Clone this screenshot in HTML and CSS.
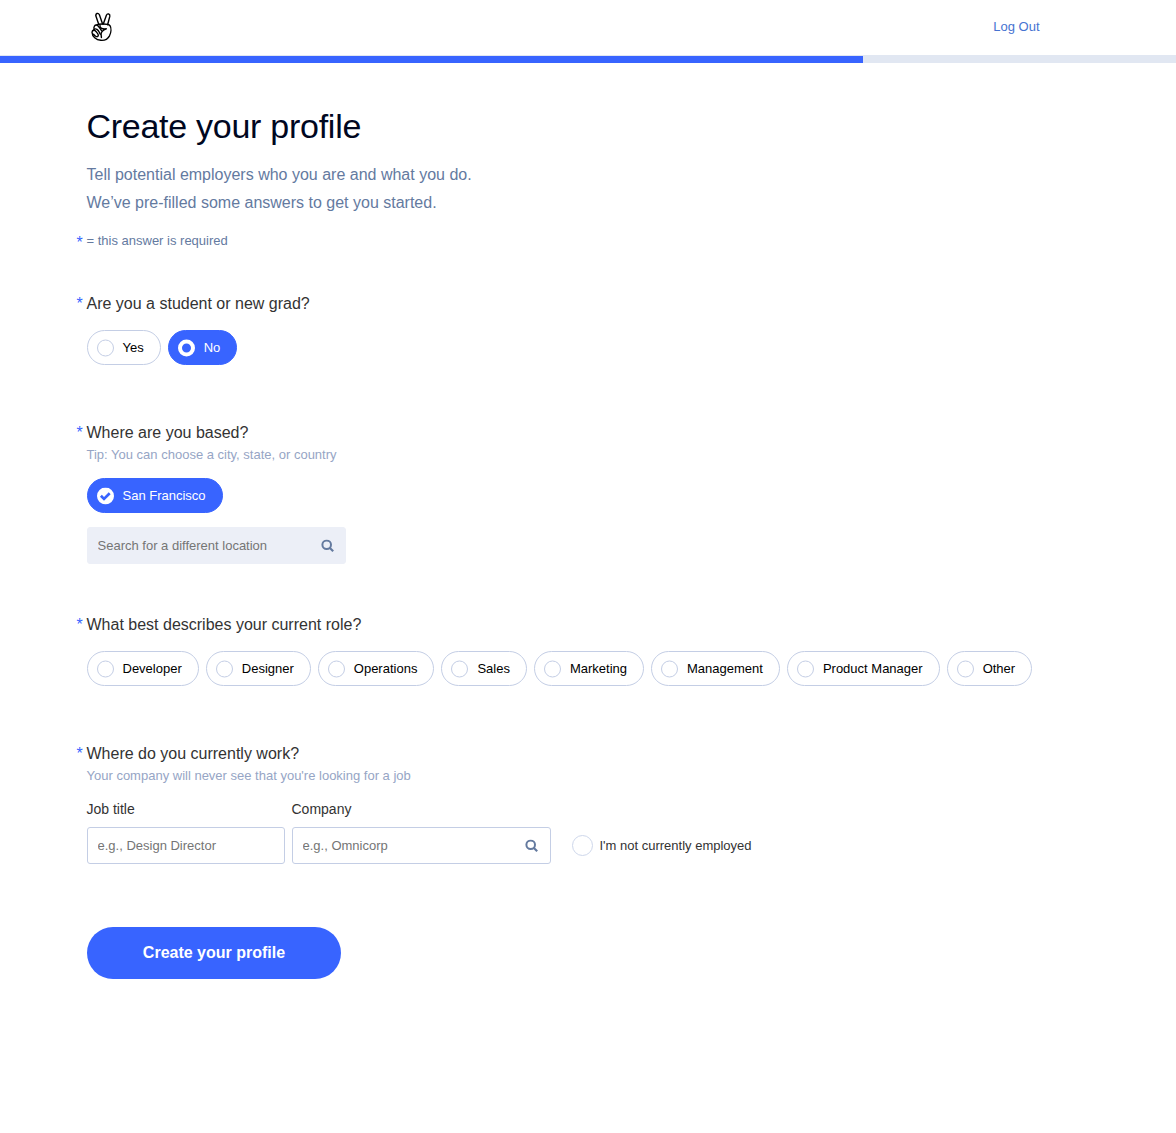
FILE: index.html
```html
<!DOCTYPE html>
<html lang="en">
<head>
<meta charset="utf-8">
<title>Create your profile</title>
<link rel="stylesheet" href="styles.css">
</head>
<body>
<svg width="0" height="0" class="sprite" aria-hidden="true">
  <symbol id="search" viewBox="0 0 13 13">
    <circle cx="5.7" cy="5.3" r="4.3" fill="none" stroke="currentColor" stroke-width="2"/>
    <path d="M8.6 8.2 12.2 11.8" stroke="currentColor" stroke-width="2.2"/>
  </symbol>
</svg>
<header class="header">
  <a class="logo" href="#" aria-label="Home">
    <svg width="22" height="30" viewBox="0 0 22 30" fill="none" stroke="#000" stroke-width="1.4" stroke-linejoin="round" stroke-linecap="round">
      <path d="M7.7 12.2 4.9 4.1C4.3 1.5 7.1.2 8.4 2.8L11.6 12"/>
      <path d="M12.3 12 15.4 3.2C16.4.9 19.4 1.8 18.8 4.4L16.6 12.7"/>
      <path d="M5.8 12.9C7.4 12 9 12 11.4 12c3.1 0 6-.2 7.6 1.7 1.5 2.3 1.1 6.9-.5 10.1-1.7 3.2-4.9 4.8-8.7 4.5C5.1 27.9 1.2 24.6 1 20.2c0-1.6 1-2.2 2.1-2.6"/>
      <path d="M3.2 17.5c-1-2.6.7-5.1 2.8-4.3 1.4.5 2.4 2.5 4.5 5.3"/>
      <path d="M1.9 18.7c1.4-1.3 3 .2 4.1 1.9 1 1.3 1.8 2.9.9 3.7-1.2 1.1-3.3-.6-4.4-2"/>
      <path d="M3.3 17.3c1.6-1.3 3.8.6 5 2.9l1 2"/>
      <path d="M9 13.4c-.6 2.3 1.5 3.8 6.3 3.4-3.6 1.4-5.5 3-5.2 5.6.1 1.6.3 2.2.3 3.1"/>
    </svg>
  </a>
  <a class="logout" href="#">Log Out</a>
</header>
<div class="progress"><div class="progress-fill"></div></div>

<main class="main">
  <h1 class="title">Create your profile</h1>
  <p class="intro">Tell potential employers who you are and what you do.<br>We’ve pre-filled some answers to get you started.</p>
  <p class="note"><span class="star star-note">*</span>= this answer is required</p>

  <section class="question">
    <h2 class="label"><span class="star">*</span>Are you a student or new grad?</h2>
    <div class="pills">
      <div class="pill"><span class="radio"></span>Yes</div>
      <div class="pill pill-on"><span class="radio radio-on"></span>No</div>
    </div>
  </section>

  <section class="question question-location">
    <h2 class="label"><span class="star">*</span>Where are you based?</h2>
    <p class="tip">Tip: You can choose a city, state, or country</p>
    <div class="pills pills-tip">
      <div class="pill pill-on">
        <svg class="check" width="17" height="17" viewBox="0 0 17 17"><circle cx="8.5" cy="8.5" r="8.5" fill="#fff"/><path d="m3.9 8.3 3.1 3.1 5.7-5.7" fill="none" stroke="#3864ff" stroke-width="2.7"/></svg>San Francisco
      </div>
    </div>
    <div class="field field-gray field-wide">
      <input class="input" type="text" placeholder="Search for a different location">
      <svg class="glass" width="13" height="13"><use href="#search"/></svg>
    </div>
  </section>

  <section class="question">
    <h2 class="label"><span class="star">*</span>What best describes your current role?</h2>
    <div class="pills">
      <div class="pill"><span class="radio"></span>Developer</div>
      <div class="pill"><span class="radio"></span>Designer</div>
      <div class="pill"><span class="radio"></span>Operations</div>
      <div class="pill"><span class="radio"></span>Sales</div>
      <div class="pill"><span class="radio"></span>Marketing</div>
      <div class="pill"><span class="radio"></span>Management</div>
      <div class="pill"><span class="radio"></span>Product Manager</div>
      <div class="pill"><span class="radio"></span>Other</div>
    </div>
  </section>

  <section class="question question-work">
    <h2 class="label"><span class="star">*</span>Where do you currently work?</h2>
    <p class="tip">Your company will never see that you're looking for a job</p>
    <div class="work">
      <label class="column">
        <span class="field-label">Job title</span>
        <span class="field field-job"><input class="input" type="text" placeholder="e.g., Design Director"></span>
      </label>
      <label class="column">
        <span class="field-label">Company</span>
        <span class="field field-wide field-company"><input class="input" type="text" placeholder="e.g., Omnicorp"><svg class="glass" width="13" height="13"><use href="#search"/></svg></span>
      </label>
      <div class="unemployed"><span class="radio radio-large"></span>I'm not currently employed</div>
    </div>
  </section>

  <button class="submit" type="button">Create your profile</button>
</main>
</body>
</html>
```
FILE: styles.css
```css
* { box-sizing: border-box; }
body {
  margin: 0;
  background: #fff;
  color: #333;
  font-family: "Liberation Sans", Arial, sans-serif;
  font-size: 13px;
}
h1, h2, p { margin: 0; font-weight: 400; }
.sprite { display: block; height: 0; }

.header {
  display: flex;
  justify-content: space-between;
  align-items: center;
  height: 56px;
  padding: 0 136.5px 2px 90.5px;
  border-bottom: 1px solid #e1e7f2;
}
.logo { display: block; height: 30px; }
.logo svg { display: block; }
.logout { color: #4673d1; line-height: 20px; text-decoration: none; }
.progress { height: 7px; background: #e1e7f2; }
.progress-fill { width: 863px; height: 7px; background: #3864ff; }

.main { padding: 43px 86.5px 0; }
.title { color: #00071f; font-size: 34px; line-height: 40px; letter-spacing: -0.27px; }
.intro { margin-top: 15px; color: #647a9f; font-size: 16px; line-height: 28px; }
.note { position: relative; margin: 14px 0 41px; color: #647a9f; line-height: 20px; }
.star {
  position: absolute;
  left: -10px;
  top: 0;
  color: #3864ff;
  font-size: 16px;
}
.star-note { top: 2px; }

.question { margin-bottom: 56px; }
.question-location { margin-bottom: 49px; }
.question-work { margin-bottom: 63px; }
.label { position: relative; font-size: 16px; line-height: 24px; }
.tip { color: #96a5c5; line-height: 20px; }

.pills { display: flex; gap: 7px; margin-top: 14px; }
.pills-tip { margin-top: 13px; }
.pill {
  display: flex;
  align-items: center;
  height: 35px;
  padding: 0 16px 0 9px;
  border: 1px solid #c4cee5;
  border-radius: 18px;
  color: #000;
  white-space: nowrap;
}
.pill-on { border-color: #3864ff; background: #3864ff; color: #fff; }
.radio {
  width: 17px;
  height: 17px;
  margin-right: 9px;
  border: 1px solid #c4cee5;
  border-radius: 50%;
  background: #fff;
}
.pill .radio, .check { transform: translateY(0.5px); }
.pill .radio-on { border: 4px solid #fff; background: #3864ff; }
.check { display: block; margin-right: 9px; }

.field {
  display: flex;
  align-items: center;
  height: 37px;
  padding: 0 11px 0 10px;
  border: 1px solid #c4cee5;
  border-radius: 3px;
}
.field-wide { width: 259px; }
.field-company { padding-right: 12px; }
.field-job { width: 198px; }
.field-gray { margin-top: 14px; border-color: #eceff7; background: #eceff7; }
.input {
  flex: 1;
  min-width: 0;
  padding: 0;
  border: 0;
  outline: 0;
  background: transparent;
  font: inherit;
}
.input::placeholder { color: #757575; }
.glass { color: #647a9f; transform: translateY(0.5px); }

.work { display: flex; align-items: flex-end; gap: 7px; margin-top: 13px; }
.column { display: flex; flex-direction: column; gap: 8px; }
.field-label { font-size: 14px; line-height: 20px; }
.unemployed { display: flex; align-items: center; height: 37px; margin-left: 14px; }
.radio-large { width: 21px; height: 21px; margin-right: 7px; border-color: #ced7eb; }

.submit {
  width: 254px;
  height: 52px;
  padding: 0 0 0 1px;
  border: 0;
  border-radius: 26px;
  background: #3864ff;
  color: #fff;
  font: 700 16px "Liberation Sans", Arial, sans-serif;
}
```
